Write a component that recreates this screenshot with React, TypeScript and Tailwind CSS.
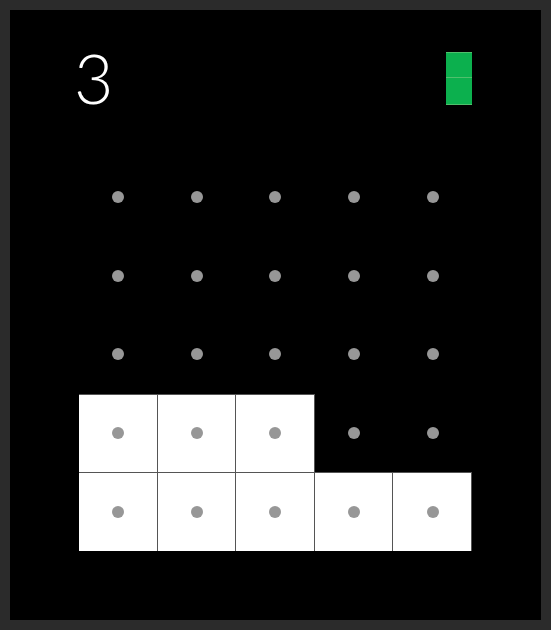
import React from "react";

const filled = [
  [0, 0, 0, 0, 0],
  [0, 0, 0, 0, 0],
  [0, 0, 0, 0, 0],
  [1, 1, 1, 0, 0],
  [1, 1, 1, 1, 1],
];

const App: React.FC = () => {
  return (
    <div className="w-[551px] h-[630px] bg-[#2b2b2b] p-[10px]">
      <div className="w-full h-full bg-black pl-[69px] pt-[42px]">
        <div className="w-[393px] h-[63px] flex justify-between items-start">
          <span
            className="text-white text-[68px] leading-[63px] font-light -ml-[5px] -mt-[6px]"
            style={{ fontFamily: "Lato, 'Noto Sans', sans-serif" }}
          >
            3
          </span>
          <div className="w-[26px] flex flex-col">
            <div className="h-[26px] bg-[#0cb04e] border-t border-b border-[#4fc06c]" />
            <div className="h-[27px] bg-[#0cb04e] border-b border-[#4fc06c]" />
          </div>
        </div>
        <div className="mt-[43px] w-[393px] h-[393px] grid grid-cols-5 grid-rows-5">
          {filled.map((row, r) =>
            row.map((f, c) => (
              <div
                key={`${r}-${c}`}
                className={
                  f
                    ? "bg-white flex items-center justify-center shadow-[inset_-1px_0_0_#555,inset_0_1px_0_#555]"
                    : "flex items-center justify-center"
                }
              >
                <div className="w-[12px] h-[12px] rounded-full bg-[#979797]" />
              </div>
            ))
          )}
        </div>
      </div>
    </div>
  );
};

export default App;
